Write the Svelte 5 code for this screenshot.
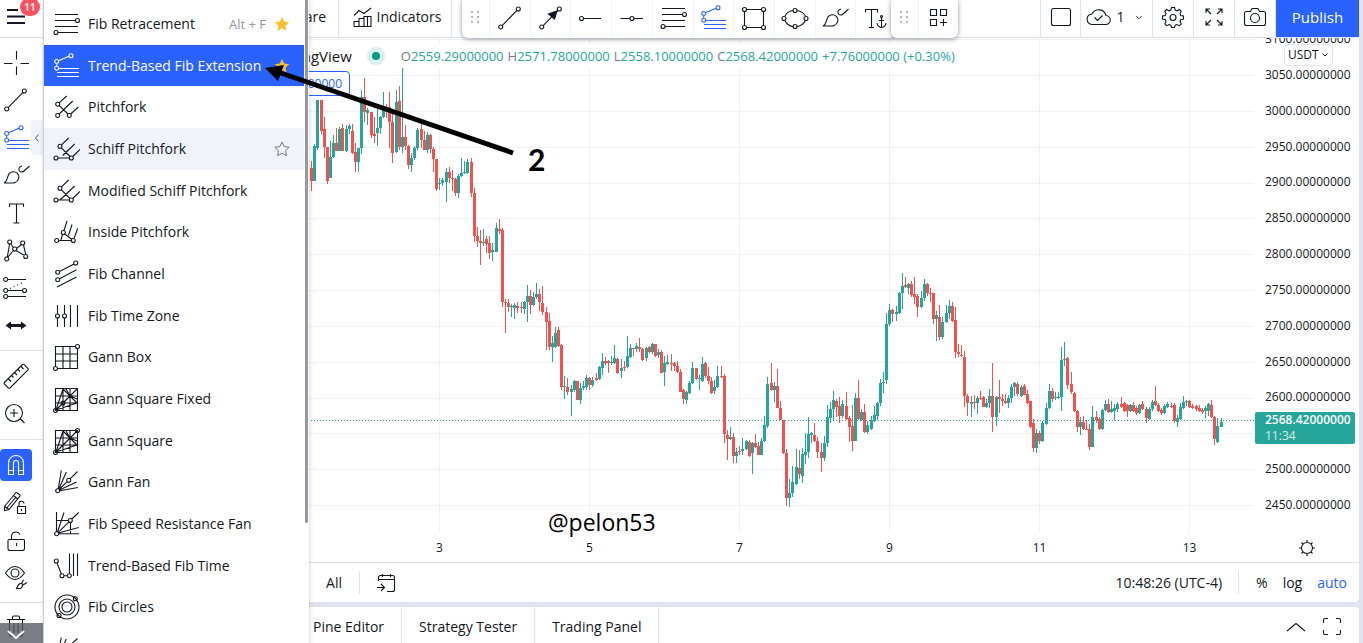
<script lang="ts">
  // Small open circle used as an anchor point in the drawing icons
  function ring(x: number, y: number): string {
    return `M${x - 2} ${y}a2 2 0 1 0 4 0a2 2 0 1 0-4 0`;
  }

  function circle(x: number, y: number, r: number): string {
    return `M${x - r} ${y}a${r} ${r} 0 1 0 ${2 * r} 0a${r} ${r} 0 1 0-${2 * r} 0`;
  }

  const gannGrid = 'M3.5 3.5H25.5V25.5H3.5ZM11 3.5V25.5M18 3.5V25.5M3.5 11H25.5M3.5 18H25.5';
  const gannRays = 'M4 25L25 4M4 25L11 4M4 25L25 18M11 4L25 18M18 11L25 14M18 11L14 4';

  // All icons share a 28x28 box
  const icons: Record<string, string> = {
    retracement: 'M3 4.5H26M3 10.5H23.5M3 16.5H26M6 22.5H26' + ring(25.5, 10.5) + ring(4, 22.5),
    extension: 'M6.5 8.7L17 4.3M4.7 11.5V14M7 16.5H27M5 20.5H27M5 24.5H27' + ring(4.7, 9.5) + ring(19, 3.7) + ring(4.7, 16.3),
    pitchfork: 'M7.2 9.8L14.7 3M7.2 21L20.7 8M18.7 21L26.3 14M7.2 12.7L16 21' + ring(5.7, 11.2) + ring(5.7, 22.5) + ring(17.3, 22.5),
    schiff: 'M9.5 9.8L16.7 3M10.7 20.5L22.7 9M20.8 21.5L28 14.5M9.4 12.8L18 21.5M6 23H17.3' + ring(8, 11.3) + ring(4, 23) + ring(19.3, 23),
    modified: 'M9.5 9.8L16.7 3M8 23L22.7 9M20.8 21.5L28 14.5M9.4 12.8L18 21.5M6 23H17.3' + ring(8, 11.3) + ring(4, 23) + ring(19.3, 23),
    inside: 'M12 12.5L15 3M16.5 17.5L20 6.5M22 20.5L25.7 10.5M12.8 16L19.7 21.2M9 22L10.5 16.5M6.7 22.5H19.3' + ring(11.3, 14.5) + ring(4.7, 22.5) + ring(21.3, 22.5),
    channel: 'M7.5 11.4L22 4M7.5 18.7L24.5 9.7M5 27L24.5 17' + ring(5.7, 12.3) + ring(23.7, 3) + ring(5.7, 19.7),
    timezone: 'M5.5 3V12M5.5 16V25M12.5 3V12M12.5 16V25M18.5 3V25M25.5 3V25' + ring(5.5, 14) + ring(12.5, 14),
    gannbox: 'M5.5 25.5H25.5V5.5M23.5 3.5H3.5V23.5M11 3.5V25.5M18 3.5V25.5M3.5 11H25.5M3.5 18H25.5' + ring(25.5, 3.5) + ring(3.5, 25.5),
    gannfixed: gannGrid + gannRays + ring(11, 18) + ring(3.5, 25.5),
    gannsquare: gannGrid + gannRays + ring(25.5, 3.5) + ring(3.5, 25.5),
    gannfan: 'M6.3 21L9.3 2.5M6.8 21.2L14.3 4M7 21.5L15.3 13.6M18 10.8L25.5 3.5M7.5 22L24.5 14M7.7 22.8L26 19.5' + ring(5.7, 22.8) + ring(16.7, 12.2),
    speedfan: 'M4.5 2V21.5M6.7 23.7H27M5 10.5H16.3M18.5 12.5V23.5M5.5 22L12 2.5M6.2 22.3L17 11.8M19.8 9L26.7 2.5M6.5 23L26.7 17.5' + ring(4.7, 23.7) + ring(18.3, 10.5),
    fibtime: 'M5 11L9.3 21.8M12 23.7H15.3M17.5 1.5V21.7M21.5 1.5V24M25.5 1.5V24' + ring(4.3, 9) + ring(10, 23.7) + ring(17.3, 23.7),
    circles: circle(15, 14, 5) + circle(15, 14, 8) + circle(15, 14, 12) + ring(23.3, 5.8) + ring(7, 22.5),
    arcs: 'M9.3 2.5L6 20M14.3 4L7 20M25.5 3.5L16 12' + ring(5.7, 22.8),
    cross: 'M14.5 2V10.5M14.5 17.5V26M2 14.5H10.5M18.5 14.5H27',
    line: 'M6.2 21.6L20.9 6.4' + ring(4.7, 23) + ring(22.3, 5),
    brush: 'M2 22C5 20.5 5 18 6 15A5.5 5.5 0 1 1 13 21.5Q12 22 11 22ZM20 5C15 6.5 17 11.5 20 11C21.5 11 22 10 27.5 5',
    text: 'M7.5 8V5H21.5V8M14.5 5V24M11.5 24H17.5',
    pattern: 'M5.3 21L7.6 8M8.8 7.5L11.5 12M14.5 12.5L19.5 8.5M14 14.5L22.5 19.5M6 21L11.5 14.5M21.5 9L23.8 18.5' + ring(7.7, 6) + ring(20.7, 7) + ring(12.7, 13) + ring(4.7, 23) + ring(23.7, 20.5),
    forecast: 'M5.7 5.5H24M5.7 16.5H20.5M5.7 22.5H24' + ring(3.7, 5.5) + ring(3.7, 16.5) + ring(22.5, 16.5) + ring(3.7, 22.5),
    ruler: 'M2.3 20.5L20.5 2.5Q21.5 2 22.2 2.7L26 6.5Q26.5 7.3 26 8L8 26Q7 26.5 6.3 26L2.3 22Q1.8 21.2 2.3 20.5ZM6.5 17L9 19.5M9.5 13.5L11.5 15.5M12.5 10.5L15 13M16 7.5L18 9.5M19 4.5L21.5 7',
    zoom: circle(12, 13, 8.5) + 'M18.5 19L22.5 23M12 9V17M8 13H16',
    magnet: 'M6.5 23.5V12A7.5 7.5 0 0 1 21.5 12V23.5H16.5V12A2.5 2.5 0 0 0 11.5 12V23.5ZM6.5 19.5H11.5M16.5 19.5H21.5',
    pencilLock: 'M2.5 17.5L13.5 4Q14.5 3 15.5 4L17.5 5.7Q18.5 6.7 17.5 7.7L7 20.5L2.5 21.5ZM2.5 17.5L7 20.5M11.5 6.5L16 10M4.8 19L14 8M15.5 17.5H23.5V24.5H15.5ZM17 17.5V15A2.5 2.5 0 0 1 22 14.5M19.5 20V22',
    lock: 'M7 13.5H21.5Q22.5 13.5 22.5 14.5V22.5Q22.5 24.5 20.5 24.5H8Q6 24.5 6 22.5V14.5Q6 13.5 7 13.5ZM9.5 13.5V10A4.5 4.5 0 0 1 18 8.5M14.5 17V20',
    eye: 'M3.5 10Q8 3.5 13 3.5T22.5 10Q18 16.5 13 16.5T3.5 10Z' + circle(13, 10, 4) + 'M14.5 25.5Q17 19.5 20 20.5Q21.5 23.5 18.5 25.5ZM20 20Q20 17.5 22 17M21 22L25 19.5',
    trash: 'M5 5.5H23M10.5 5V3Q10.5 2 11.5 2H16.5Q17.5 2 17.5 3V5M7.5 6V20Q7.5 22.5 10 22.5H18Q20.5 22.5 20.5 20V6M12 9V19M16 9V19',
    arrow: 'M6.2 21.6L21 6.3' + ring(4.7, 23) + ring(22.3, 5),
    hray: 'M6.5 14.5H24' + ring(4.5, 14.5),
    hline: 'M2.5 14.5H12M16 14.5H25' + ring(14, 14.5),
    rect: 'M6 5.5H22M6 23.5H22M4.5 7V22M23.5 7V22' + ring(4.5, 5.5) + ring(23.5, 5.5) + ring(4.5, 23.5) + ring(23.5, 23.5),
    ellipse: 'M4 12Q6 7.5 12 6.5M16 6.5Q22 7.5 24.5 12M4 16.5Q6 21.5 12 22.7M16 22.7Q22 21.5 24.5 16.5' + ring(14, 6.5) + ring(14, 22.5) + ring(3, 14.5) + ring(25, 14.5),
    anchorText: 'M3.5 8.5V5.5H15.5V8.5M9.5 5.5V23.5M7 23.5H12M19.5 13V23M17 16.5H22M15 19Q15.5 23 19.5 23.5Q23.5 23 24 19' + circle(19.5, 12.5, 1),
    templates: 'M5.5 5.5H11.5V11.5H5.5ZM15.5 5.5H21.5V11.5H15.5ZM5.5 15.5H11.5V21.5H5.5ZM18.5 15V22M15 18.5H22',
    indicators: 'M5 23.5V18.5H10V23.5M10 23.5V15.5H15V23.5M15 23.5V13.5H22V23.5ZM18.5 13.5V23.5M5 23.5H22M5 12.5L10 7.5L15 10.5L22 5',
    layout: 'M6.5 5.5H21.5Q23.5 5.5 23.5 7.5V20.5Q23.5 22.5 21.5 22.5H6.5Q4.5 22.5 4.5 20.5V7.5Q4.5 5.5 6.5 5.5Z',
    cloud: 'M7.5 21.5H21.5A4.5 4.5 0 0 0 22 12.5A7.5 7.5 0 0 0 8 11A5.3 5.3 0 0 0 7.5 21.5ZM10.5 14.5L13.5 17.5L18.5 12.5',
    chevron: 'M10 12.5L14 16.5L18 12.5',
    fullscreen: 'M11 11L6 6M6 10V6H10M17 11L22 6M18 6H22V10M11 17L6 22M6 18V22H10M17 17L22 22M18 22H22V18',
    camera: 'M5.5 8.5H9.5L11 5.5H17L18.5 8.5H22.5Q24.5 8.5 24.5 10.5V20.5Q24.5 22.5 22.5 22.5H5.5Q3.5 22.5 3.5 20.5V10.5Q3.5 8.5 5.5 8.5Z' + circle(14, 15, 4.5),
    gear: 'M12.5 4.5H15.5L16.2 7L18 7.8L20.5 6.5L22.2 8.3L21 10.8L21.7 12.5L24.5 13V16L21.7 16.7L21 18.5L22.2 21L20.5 22.7L18 21.5L16.2 22.2L15.5 24.5H12.5L11.8 22.2L10 21.5L7.5 22.7L5.8 21L7 18.5L6.3 16.7L3.5 16V13L6.3 12.5L7 10.8L5.8 8.3L7.5 6.5L10 7.8L11.8 7Z' + circle(14, 14.5, 3),
    sun: circle(14, 14, 5.5) + 'M14 6V8.5M14 19.5V22M6 14H8.5M19.5 14H22M8.5 8.5L10 10M18 18L19.5 19.5M8.5 19.5L10 18M18 10L19.5 8.5',
    goto: 'M6.5 12V8.5Q6.5 6.5 8.5 6.5H20.5Q22.5 6.5 22.5 8.5V20.5Q22.5 22.5 20.5 22.5H15M6.5 10.5H22.5M10.5 5V8M18.5 5V8M5 18.5H12M9 15L12.5 18.5L9 22',
    up: 'M5 18L14 10.5L23 18',
    corners: 'M5.5 10V7Q5.5 5.5 7 5.5H10M18 5.5H21Q22.5 5.5 22.5 7V10M5.5 17V20Q5.5 21.5 7 21.5H10M18 21.5H21Q22.5 21.5 22.5 20V17',
  };

  const starPath = 'M8 1L10.2 5.6L15.2 6.2L11.5 9.7L12.5 14.7L8 12.2L3.5 14.7L4.5 9.7L0.8 6.2L5.8 5.6Z';

  const drawGroups = [
    ['cross', 'line', 'extension', 'brush', 'text', 'pattern', 'forecast', 'measure'],
    ['ruler', 'zoom'],
    ['magnet', 'pencilLock', 'lock', 'eye'],
  ];

  const menu = [
    { icon: 'retracement', label: 'Fib Retracement', hint: 'Alt + F', star: 'on' },
    { icon: 'extension', label: 'Trend-Based Fib Extension', star: 'on', state: 'active' },
    { icon: 'pitchfork', label: 'Pitchfork' },
    { icon: 'schiff', label: 'Schiff Pitchfork', star: 'off', state: 'hover' },
    { icon: 'modified', label: 'Modified Schiff Pitchfork' },
    { icon: 'inside', label: 'Inside Pitchfork' },
    { icon: 'channel', label: 'Fib Channel' },
    { icon: 'timezone', label: 'Fib Time Zone' },
    { icon: 'gannbox', label: 'Gann Box' },
    { icon: 'gannfixed', label: 'Gann Square Fixed' },
    { icon: 'gannsquare', label: 'Gann Square' },
    { icon: 'gannfan', label: 'Gann Fan' },
    { icon: 'speedfan', label: 'Fib Speed Resistance Fan' },
    { icon: 'fibtime', label: 'Trend-Based Fib Time' },
    { icon: 'circles', label: 'Fib Circles' },
    { icon: 'arcs', label: '' },
  ];

  const favorites = ['line', 'arrow', 'hray', 'hline', 'retracement', 'extension', 'rect', 'ellipse', 'brush', 'anchorText'];

  const ohlc = [
    ['O', '2559.29000000'],
    ['H', '2571.78000000'],
    ['L', '2558.10000000'],
    ['C', '2568.42000000'],
  ];

  const prices = Array.from({ length: 14 }, (_, i) => 3100 - i * 50);
  const days = [3, 5, 7, 9, 11, 13];

  // Plot area, in chart units
  const plot = { x: 44, y: 38, w: 1210, h: 495 };
  const step = 3.125;
  const firstX = 311.7;

  const priceY = (price: number) => 111 + (3000 - price) * 0.7164;
  const dayX = (day: number) => 439.5 + (day - 3) * 75;

  // Hourly candles: open, close, high, low
  const candles: number[][] = [
    [168,181,161,191],[181,146,144,181],[148,100,100,150],[100,131,100,134],[129,147,117,158],[147,181,147,184],[178,157,141,178],[157,143,135,158],[143,151,128,151],[151,129,127,151],
    [128,151,124,151],[151,129,125,152],[129,126,124,134],[131,153,124,154],[152,162,143,172],[162,148,148,172],[148,97,90,154],[97,112,78,122],[113,110,108,125],[112,135,112,138],
    [134,136,117,143],[133,128,109,146],[128,117,116,134],[117,107,92,118],[107,108,104,118],[107,122,92,148],[122,153,110,163],[152,102,90,153],[101,147,86,150],[147,137,67,153],
    [137,146,125,150],[146,165,145,169],[165,158,153,172],[158,148,146,160],[148,130,128,150],[129,140,124,148],[140,150,131,150],[150,135,132,153],[135,149,134,153],[149,159,147,172],
    [159,189,159,191],[184,183,178,190],[183,180,178,186],[182,172,168,202],[172,178,167,183],[178,179,170,191],[179,193,178,196],[193,176,174,198],[176,173,158,177],[173,172,161,174],
    [173,162,159,174],[162,193,158,197],[193,236,188,242],
    [236,241,227,247],[241,243,230,265],[243,242,229,246],[239,244,236,253],[243,253,236,259],[252,250,243,261],[252,228,223,252],[229,231,219,234],[230,302,228,307],[302,303,299,333],
    [303,307,299,312],[307,306,304,317],[308,305,303,319],[306,308,302,313],[307,308,302,313],[309,302,301,314],[302,296,285,322],[296,305,290,314],[305,297,292,306],[297,294,283,299],
    [294,302,289,311],[303,312,286,315],[312,322,307,350],[321,347,313,350],[347,343,336,362],[347,333,327,348],[330,346,327,347],[345,387,344,390],[387,386,376,399],[387,392,378,395],
    [392,389,385,416],[390,381,380,392],[381,400,381,400],[400,388,383,404],[388,386,381,390],[387,378,375,390],[378,385,377,390],[385,380,377,387],[378,380,373,381],[379,367,366,380],
    [368,361,353,375],[361,363,357,365],[361,363,360,373],[363,362,356,365],[363,358,345,364],[359,373,358,374],[371,368,359,378],[367,368,361,371],[367,356,336,368],[357,348,344,358],
    [348,349,348,356],[349,346,343,352],[347,349,338,352],[349,360,348,361],[358,348,347,361],[347,352,346,353],[352,344,343,354],[344,356,344,357],[355,352,349,358],[352,373,350,373],
    [372,363,356,386],[364,362,355,365],[363,364,354,371],[363,366,362,371],[366,372,361,373],[372,392,369,392],[390,399,389,404],[400,392,391,404],[393,383,381,394],[383,368,362,384],
    [368,379,368,380],[379,378,375,390],[381,364,357,382],[363,376,362,378],[376,381,367,384],[381,393,377,394],[391,387,380,394],[387,376,366,388],[376,377,366,378],[376,434,374,443],
    [435,439,430,460],[439,437,427,440],[437,456,433,463],[456,452,448,463],
    [451,452,446,455],[451,449,438,455],[449,441,440,450],[442,456,440,457],[453,443,442,474],[443,447,434,448],[446,455,442,455],[455,441,438,455],[441,425,416,442],[426,384,377,428],
    [383,390,363,391],[390,386,382,402],[386,408,369,408],[408,420,401,420],[420,453,420,454],[453,498,449,506],[498,493,479,507],[493,482,466,497],[484,467,449,485],[468,474,450,479],
    [476,454,448,483],[455,452,433,464],[452,434,417,458],[435,433,432,443],[435,441,423,442],[441,452,437,458],[452,458,443,472],[458,443,436,461],[443,417,405,447],[418,409,402,423],
    [409,400,391,420],[401,407,399,417],[406,416,397,423],[416,404,400,418],[406,419,392,420],[418,427,416,442],[426,441,405,451],[441,398,393,441],[398,419,380,420],[420,412,409,421],
    [412,432,404,433],[432,425,421,434],[429,420,416,430],[421,415,406,422],[416,403,402,420],[403,383,379,406],[383,382,372,393],[380,324,313,384],[324,310,304,326],[310,314,309,322],
    [314,312,306,321],[313,293,292,314],[293,286,273,309],[285,287,277,288],[288,284,283,294],[284,295,281,297],[294,297,277,304],[296,307,294,317],[307,298,291,308],[298,284,279,301],
    [284,293,283,296],[293,294,288,302],[293,319,293,324],[319,315,311,341],[317,337,305,340],[337,322,317,339],[322,313,305,323],[313,306,300,319],[306,321,302,322],[320,352,307,358],
    [352,354,344,357],[355,356,345,357],[357,396,351,407],[396,403,394,416],[404,402,396,417],[402,403,395,409],[403,398,396,414],[398,399,391,400],[397,407,396,407],[407,403,399,408],
    [403,396,389,408],[396,417,363,432],[417,397,396,426],[397,399,380,413],[399,401,394,406],[401,403,394,404],[403,398,395,408],[398,387,384,403],[387,383,382,396],[384,394,382,396],
    [396,387,385,397],[386,395,384,395],[394,403,390,404],
    [401,427,401,428],[423,448,419,452],[448,433,429,453],[433,441,431,444],[441,423,421,442],[424,408,403,425],[408,391,384,409],[391,399,388,402],[398,397,392,400],[398,397,392,399],
    [397,360,347,411],[360,359,342,366],[358,385,357,389],[384,392,372,394],[393,411,392,412],[411,427,410,432],[427,422,417,435],[422,429,416,430],[429,430,420,430],[429,447,424,450],
    [447,417,406,447],[417,420,411,423],[419,429,417,430],[429,410,409,430],[410,404,400,411],[404,412,399,413],[412,409,401,413],[411,408,404,420],[409,404,402,412],[404,407,397,408],
    [403,411,402,412],[405,411,404,417],[411,405,404,412],[405,411,402,412],[408,413,406,415],[413,405,404,414],[404,409,401,410],[409,418,407,423],[419,409,407,420],[409,402,400,411],
    [401,405,386,406],[405,411,403,412],[410,413,408,415],[413,406,404,414],[407,404,402,408],[406,407,403,408],[405,421,403,423],[422,418,415,427],[419,407,403,420],[408,402,396,409],
    [402,401,400,406],[401,407,400,408],[406,408,404,409],[406,409,405,411],[408,411,405,412],[410,412,408,414],[411,408,406,418],[411,404,403,416],[405,417,400,418],[417,439,416,445],
    [442,426,418,443],[427,422,418,427],
  ];
</script>

{#snippet icon(name: string)}
  <svg class="icon" viewBox="0 0 28 28" aria-hidden="true">
    {#if name === 'measure'}
      <path class="solid" d="M4.5 14.5L8.500 11.5V13.500H19.500V11.5L23.500 14.5L19.500 17.5V15.500H8.500V17.5Z" />
    {:else}
      <path d={icons[name]} />
    {/if}
    {#if name === 'arrow'}
      <path class="solid" d="M20 7L17.5 15L11.5 10Z" />
    {:else if name === 'forecast'}
      <path stroke-dasharray="1 3" d="M8 14.5L22 8" />
    {/if}
  </svg>
{/snippet}

{#snippet handle()}
  <svg class="handle" viewBox="0 0 10 18" aria-hidden="true">
    {#each [2, 7, 12] as y}
      <rect x="1" {y} width="2" height="2" />
      <rect x="7" {y} width="2" height="2" />
    {/each}
  </svg>
{/snippet}

<div class="app">
  <aside class="sidebar">
    <button class="burger" aria-label="Menu">
      <svg viewBox="0 0 20 18"><path d="M1 2H12M1 8.5H19M1 15H19" /></svg>
      <span class="badge">11</span>
    </button>
    {#each drawGroups as group, g}
      <div class="tools tools-{g}">
        {#each group as name}
          <button
            class="tool"
            class:blue={name === 'extension'}
            class:pressed={name === 'magnet'}
            aria-label={name}
          >
            {@render icon(name)}
          </button>
        {/each}
      </div>
    {/each}
    <div class="tools trash">
      <button class="tool" aria-label="Remove">{@render icon('trash')}</button>
    </div>
    <div class="scroll-hint">
      <svg viewBox="0 0 20 12"><path d="M2 2L10 9L18 2" /></svg>
    </div>
    <button class="expand" aria-label="Collapse">
      <svg viewBox="0 0 6 10"><path d="M4.5 1.5L1.5 5L4.5 8.5" /></svg>
    </button>
  </aside>

  <main>
    <header class="topbar">
      <button class="compare">Compare</button>
      <button class="indicators">{@render icon('indicators')}Indicators</button>
      <div class="spacer"></div>
      <button class="square" aria-label="Layout">{@render icon('layout')}</button>
      <button class="save">{@render icon('cloud')}<span>1</span>{@render icon('chevron')}</button>
      <button class="square" aria-label="Settings">{@render icon('gear')}</button>
      <button class="square" aria-label="Fullscreen">{@render icon('fullscreen')}</button>
      <button class="square" aria-label="Snapshot">{@render icon('camera')}</button>
      <button class="publish">Publish</button>
    </header>

    <section class="chart">
      <div class="pane">
        <svg
          class="plot"
          viewBox="{plot.x} {plot.y} {plot.w} {plot.h}"
          preserveAspectRatio="none"
          role="img"
          aria-label="Price chart"
        >
          <g class="grid">
            {#each prices as price}
              <path d="M{plot.x} {Math.round(priceY(price))}.5h{plot.w}" />
            {/each}
            {#each days as day}
              <path d="M{dayX(day)} {plot.y}v{plot.h}" />
            {/each}
          </g>
          <path class="last-line" d="M{plot.x} 420.5h{plot.w}" />
          {#each candles as [open, close, high, low], i}
            {@const x = firstX + i * step}
            <g class={close < open ? 'up' : 'down'}>
              <rect x={x - 0.5} y={high} width="1" height={Math.max(1, low - high)} />
              <rect x={x - 1.5} y={Math.min(open, close)} width="3" height={Math.max(1, Math.abs(close - open))} />
            </g>
          {/each}
        </svg>
        <div class="legend">
          <span class="source">TradingView</span>
          <i class="status"></i>
          <p>
            {#each ohlc as [key, value]}
              <span class="pair"><b>{key}</b>{value}</span>
            {/each}
            <span class="pair">+7.76000000 (+0.30%)</span>
          </p>
        </div>
        <button class="quote">2568.42000000</button>
      </div>

      <div class="price-axis">
        <div class="price-list">
          {#each prices as price}
            <span>{price === 2550 ? '' : price.toFixed(8)}</span>
          {/each}
        </div>
        <button class="currency">USDT
          <svg viewBox="0 0 8 6"><path d="M1.5 1.5L4 4L6.5 1.5" /></svg>
        </button>
        <div class="last-price"><strong>2568.42000000</strong><span>11:34</span></div>
      </div>

      <div class="time-axis">
        {#each days as day}
          <span style="left: {((dayX(day) - plot.x) / plot.w) * 100}%">{day}</span>
        {/each}
      </div>
      <button class="axis-settings" aria-label="Chart settings">{@render icon('sun')}</button>
    </section>

    <div class="range-bar">
      <button class="all">All</button>
      <button class="goto" aria-label="Go to">{@render icon('goto')}</button>
      <div class="spacer"></div>
      <button class="clock">10:48:26 (UTC-4)</button>
      <div class="scale">
        <button>%</button>
        <button>log</button>
        <button class="blue">auto</button>
      </div>
    </div>

    <footer class="tabs">
      <button>Pine Editor</button>
      <button>Strategy Tester</button>
      <button>Trading Panel</button>
      <div class="spacer"></div>
      <button class="plain" aria-label="Open panel">{@render icon('up')}</button>
      <button class="plain" aria-label="Maximize panel">{@render icon('corners')}</button>
    </footer>
  </main>

  <div class="floating favorites">
    {@render handle()}
    {#each favorites as name}
      <button class:blue={name === 'extension'} aria-label={name}>{@render icon(name)}</button>
    {/each}
  </div>
  <div class="floating templates">
    {@render handle()}
    <button aria-label="Templates">{@render icon('templates')}</button>
  </div>

  <nav class="menu">
    {#each menu as item}
      <button class="item {item.state ?? ''}" aria-label={item.label || 'More'}>
        {@render icon(item.icon)}
        <span class="label">{item.label}</span>
        {#if item.hint}<kbd>{item.hint}</kbd>{/if}
        {#if item.star}
          <svg class="star {item.star}" viewBox="0 0 16 16"><path d={starPath} /></svg>
        {/if}
      </button>
    {/each}
    <div class="scrollbar"></div>
  </nav>

  <!-- Tutorial annotations drawn over the chart -->
  <svg class="pointer" viewBox="0 0 260 100" aria-hidden="true">
    <path class="shaft" d="M14 11L249 92" />
    <path class="head" d="M1 7L20 4L14 20Z" />
  </svg>
  <span class="note number">2</span>
  <span class="note author">@pelon53</span>
</div>

<style>
  :global(body) {
    background: #e0e3eb;
  }

  .app {
    --blue: #2962ff;
    --line: #e0e3eb;
    --ink: #131722;
    --teal: #26a69a;
    position: relative;
    display: flex;
    height: 100vh;
    overflow: hidden;
    color: var(--ink);
    font-family: "Open Sans", "Noto Sans", sans-serif;
    font-size: 14px;
    line-height: 18px;
  }

  button {
    display: flex;
    align-items: center;
    justify-content: center;
    padding: 0;
    border: 0;
    background: none;
    color: inherit;
    font: inherit;
    white-space: nowrap;
    cursor: pointer;
  }

  svg {
    flex: none;
    fill: none;
    stroke: currentColor;
  }

  .icon {
    width: 28px;
    height: 28px;
    stroke-width: 1.1;
  }

  .solid {
    fill: currentColor;
  }

  .blue {
    color: var(--blue);
  }

  .spacer {
    flex: 1;
  }

  /* Left toolbar */
  .sidebar {
    position: relative;
    flex: none;
    width: 43px;
    border-right: 1px solid var(--line);
    background: #fff;
  }

  .burger {
    position: relative;
    width: 43px;
    height: 38px;
    padding: 0 12px 3px 0;
    border-bottom: 1px solid var(--line);
    box-sizing: border-box;
  }

  .burger svg {
    width: 20px;
    height: 18px;
    stroke-width: 2;
  }

  .badge {
    position: absolute;
    top: -2px;
    left: 20px;
    width: 20px;
    border-radius: 9px;
    background: #f7525f;
    color: #fff;
    font-size: 10px;
    font-weight: 600;
    text-align: center;
  }

  .tools {
    display: flex;
    flex-direction: column;
    padding: 6px 0;
    border-bottom: 1px solid var(--line);
  }

  .tools-0 {
    height: 300px;
  }

  .tools-1 {
    height: 76px;
  }

  .tools-2 {
    height: 150px;
  }

  .trash {
    height: 38px;
  }

  .tool {
    flex: 1;
    width: 32px;
  }

  .pressed {
    align-self: flex-start;
    flex: none;
    height: 32px;
    margin: 3px 0;
    border-radius: 4px;
    background: var(--blue);
    color: #fff;
  }

  .scroll-hint {
    position: absolute;
    bottom: 0;
    left: 0;
    width: 43px;
    height: 20px;
    background: rgb(80 83 94 / 75%);
    color: #fff;
  }

  .scroll-hint svg {
    width: 20px;
    height: 12px;
    margin: 6px;
    stroke-width: 2;
  }

  .expand {
    position: absolute;
    top: 120px;
    right: 0;
    width: 12px;
    height: 35px;
    border-radius: 4px 0 0 4px;
    background: #f0f3fa;
    color: #50535e;
  }

  .expand svg {
    width: 6px;
    height: 10px;
  }

  /* Main column */
  main {
    display: flex;
    flex: 1;
    flex-direction: column;
    min-width: 0;
    margin-right: 4px;
  }

  .topbar {
    display: flex;
    height: 37px;
    border-bottom: 1px solid var(--line);
    background: #fff;
  }

  .topbar button {
    padding-bottom: 3px;
    border-right: 1px solid var(--line);
  }

  .topbar .compare {
    width: 295px;
    padding-right: 12px;
    justify-content: flex-end;
  }

  .indicators {
    width: 113px;
  }

  .topbar .square {
    width: 41px;
  }

  .topbar .square:nth-child(4) {
    border-left: 1px solid var(--line);
  }

  .save {
    width: 72px;
    gap: 4px;
  }

  .save .icon:last-child {
    width: 20px;
  }

  .topbar .publish {
    width: 83px;
    border: 0;
    background: var(--blue);
    color: #fff;
    font-size: 15px;
    font-weight: 500;
  }

  .chart {
    display: grid;
    flex: 1;
    grid-template-columns: 1fr 105px;
    grid-template-rows: 1fr 29px;
    min-height: 0;
    border-bottom: 1px solid var(--line);
    background: #fff;
  }

  .pane {
    position: relative;
    min-width: 0;
    min-height: 0;
  }

  .plot {
    display: block;
    width: 100%;
    height: 100%;
    stroke: none;
    shape-rendering: crispEdges;
  }

  .grid path {
    stroke: #f0f1f3;
  }

  .last-line {
    stroke: var(--teal);
    stroke-dasharray: 1 2;
  }

  .up {
    fill: #26a69a;
  }

  .down {
    fill: #ef5350;
  }

  .legend {
    position: absolute;
    top: 6px;
    left: 222px;
    display: flex;
    align-items: center;
    height: 24px;
    background: #fff;
  }

  .source {
    font-size: 15px;
  }

  .status {
    width: 8px;
    height: 8px;
    margin: 0 21px 0 20px;
    border-radius: 50%;
    background: #089981;
    box-shadow: 0 0 0 5px #d9f0ec;
  }

  .legend p {
    display: flex;
    gap: 4px;
    margin: 0;
    color: var(--teal);
    font-size: 13px;
  }

  .pair b {
    color: #787b86;
    font-weight: 400;
  }

  .quote {
    position: absolute;
    top: 33px;
    left: 206px;
    width: 100px;
    height: 25px;
    padding-right: 7px;
    justify-content: flex-end;
    border: 1px solid var(--blue);
    border-radius: 4px;
    background: #fff;
    color: var(--blue);
    font-size: 12px;
  }

  .price-axis {
    position: relative;
    overflow: hidden;
    font-size: 12px;
  }

  .price-list {
    display: flex;
    flex-direction: column;
    justify-content: space-between;
    height: 484px;
    margin-top: -8px;
    padding-left: 11px;
  }

  .price-list span {
    height: 18px;
  }

  .currency {
    position: absolute;
    top: 6px;
    left: 30px;
    gap: 2px;
    height: 22px;
    padding: 0 3px;
    border: 1px solid var(--line);
    border-radius: 4px;
    background: #fff;
  }

  .currency svg {
    width: 8px;
    height: 6px;
  }

  .last-price {
    position: absolute;
    top: 374px;
    left: 1px;
    display: flex;
    flex-direction: column;
    width: 90px;
    height: 32px;
    padding-left: 10px;
    border-radius: 2px;
    background: var(--teal);
    color: #fff;
    line-height: 16px;
  }

  .last-price strong {
    font-weight: 600;
  }

  .last-price span {
    opacity: 0.8;
  }

  .time-axis {
    position: relative;
    font-size: 12px;
  }

  .time-axis span {
    position: absolute;
    top: 6px;
    transform: translateX(-50%);
  }

  .range-bar {
    display: flex;
    align-items: center;
    height: 39px;
    padding-right: 12px;
    border-radius: 0 0 4px 4px;
    background: #fff;
  }

  .all {
    width: 316px;
    height: 23px;
    padding-right: 17px;
    justify-content: flex-end;
    border-right: 1px solid var(--line);
  }

  .goto {
    margin-left: 12px;
  }

  .clock {
    height: 23px;
    padding-right: 16px;
    border-right: 1px solid var(--line);
  }

  .scale {
    display: flex;
    gap: 15px;
    padding-left: 17px;
  }

  .tabs {
    display: flex;
    height: 36px;
    margin-top: 5px;
    padding-left: 252px;
    border-radius: 4px 4px 0 0;
    background: #fff;
  }

  .tabs button {
    padding: 4px 17px 0;
    border-right: 1px solid var(--line);
  }

  .tabs .plain {
    padding: 4px 0 0;
    border: 0;
  }

  .plain + .plain {
    margin: 0 13px 0 8px;
  }

  /* Floating toolbars */
  .floating {
    position: absolute;
    top: -3px;
    display: flex;
    align-items: center;
    height: 41px;
    border-radius: 6px;
    background: #fff;
    box-shadow: 0 1px 5px rgb(60 64 80 / 55%);
  }

  .favorites {
    left: 462px;
    width: 434px;
  }

  .templates {
    left: 891px;
    width: 67px;
  }

  .handle {
    width: 10px;
    height: 18px;
    margin: 0 9px 0 8px;
    fill: #b2b5be;
    stroke: none;
  }

  .floating button {
    flex: 1;
    align-self: stretch;
    border-left: 1px solid #f0f3fa;
  }

  /* Drawing tools menu */
  .menu {
    position: absolute;
    top: 0;
    left: 44px;
    display: grid;
    grid-template-rows: repeat(16, 1fr);
    width: 265px;
    height: 667px;
    padding-top: 3px;
    background: #fff;
    box-shadow: 0 0 4px rgb(60 64 80 / 30%);
  }

  .item {
    width: 260px;
    padding: 0 14px 0 8px;
    gap: 8px;
  }

  .label {
    flex: 1;
    text-align: left;
  }

  .active {
    background: var(--blue);
    color: #fff;
    font-weight: 500;
  }

  .hover {
    background: #f0f3fa;
  }

  kbd {
    color: #9598a1;
    font-family: inherit;
    font-size: 13px;
  }

  .star {
    width: 16px;
    height: 16px;
  }

  .star.on {
    fill: #fbc02d;
    stroke: none;
  }

  .star.off {
    color: #787b86;
  }

  .scrollbar {
    position: absolute;
    top: 0;
    right: 1px;
    width: 3px;
    height: 523px;
    border-radius: 0 0 2px 2px;
    background: #9598a1;
  }

  /* Annotations */
  .pointer {
    position: absolute;
    top: 61px;
    left: 264px;
    width: 260px;
    height: 100px;
    stroke: none;
    pointer-events: none;
  }

  .shaft {
    stroke: #000;
    stroke-width: 5;
  }

  .head {
    fill: #000;
  }

  .note {
    position: absolute;
    color: #000;
  }

  .number {
    top: 141px;
    left: 528px;
    font: 700 30px/36px Lato, sans-serif;
  }

  .author {
    top: 507px;
    left: 548px;
    font-size: 23px;
    line-height: 30px;
  }
</style>
